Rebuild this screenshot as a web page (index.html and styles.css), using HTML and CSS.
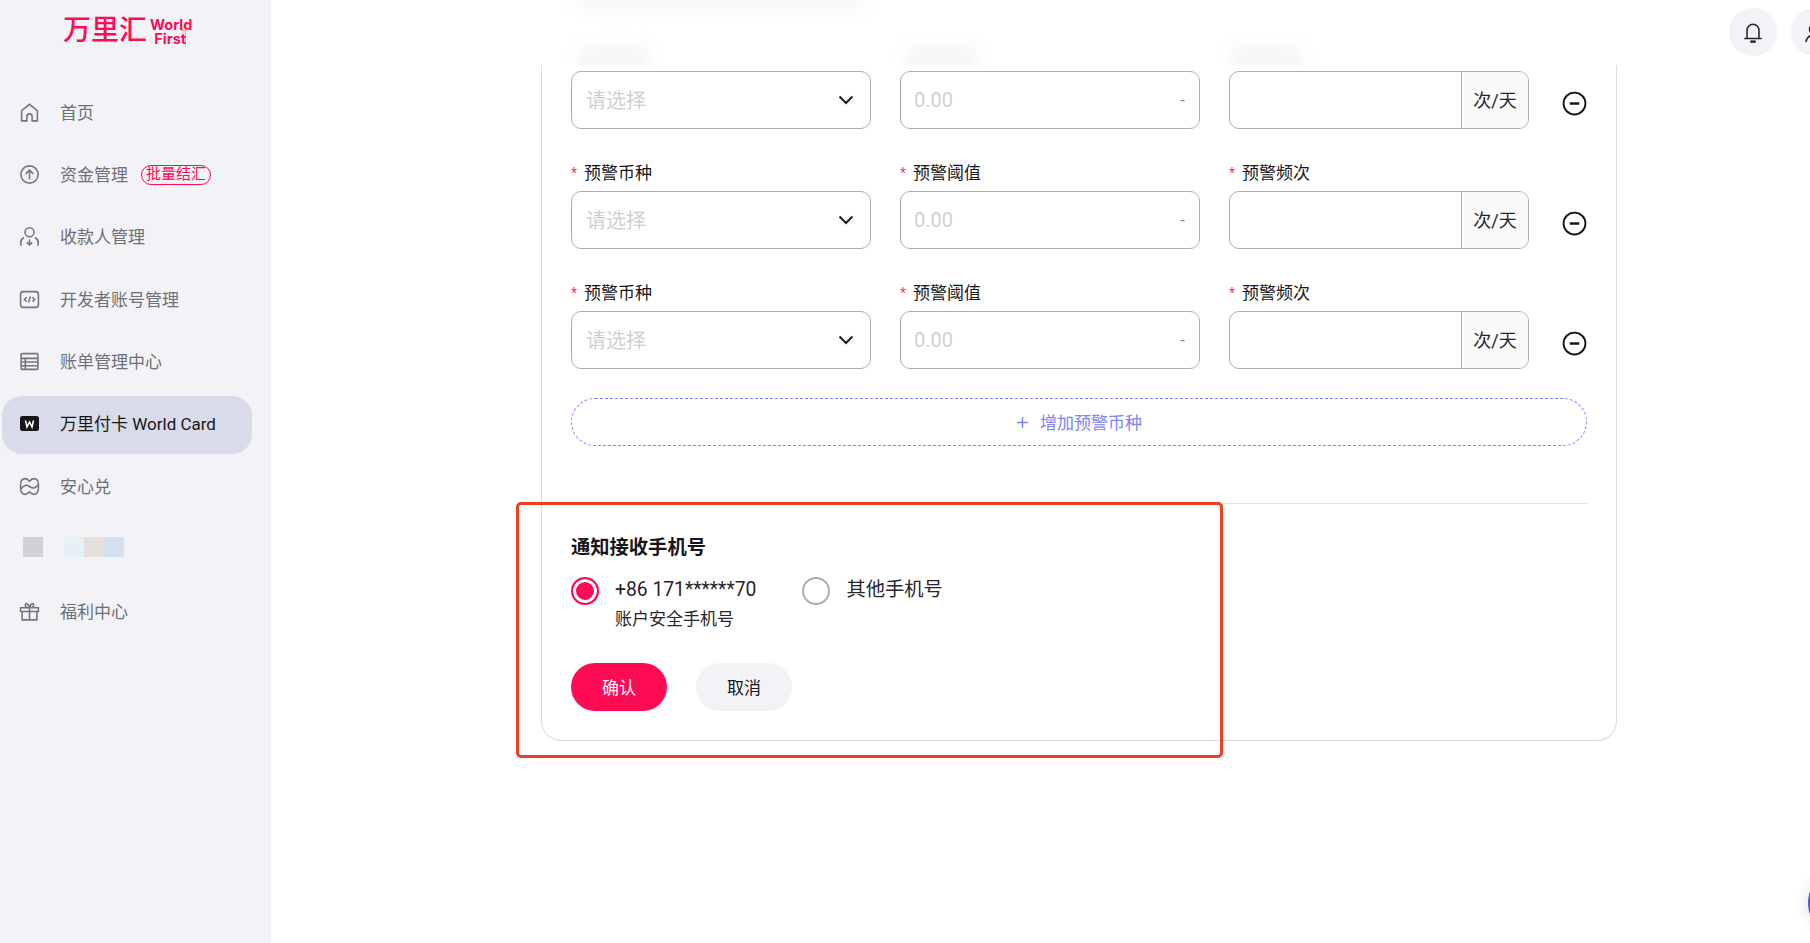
FILE: index.html
```html
<!DOCTYPE html>
<html lang="zh-CN">
<head>
<meta charset="utf-8">
<title>万里付卡 World Card</title>
<link rel="stylesheet" href="styles.css">
</head>
<body>
<div class="app">
  <aside class="sidebar">
    <div class="logo"><span class="logo-cn">万里汇</span><span class="logo-en"><span>World</span><span class="first">Firs<span class="tail">t</span></span></span></div>
    <nav class="nav">
      <a class="nav-item"><svg class="ico" viewBox="0 0 20 20"><path d="M2.500 18V8.200L10 2.200l7.500 6V18h-5v-4.200a2.500 2.500 0 0 0-5 0V18z"/></svg><span>首页</span></a>
      <a class="nav-item"><svg class="ico" viewBox="0 0 20 20"><circle cx="10" cy="10" r="8.200"/><path d="M10 14.800V6M6.400 9.400 10 5.800l3.600 3.600"/></svg><span>资金管理</span><span class="badge">批量结汇</span></a>
      <a class="nav-item"><svg class="ico" viewBox="0 0 20 20"><circle cx="10" cy="6" r="4.300"/><path d="M4.600 11C2.600 12.200 1.600 14 1.600 16.200c0 1 .3 1.800 .7 2.500M15.400 11c2 1.200 3 3 3 5.200 0 1-.3 1.800-.7 2.500M10 12.800v5.200M7.500 15.600 10 18l2.500-2.400"/></svg><span>收款人管理</span></a>
      <a class="nav-item"><svg class="ico" viewBox="0 0 20 20"><rect x="1.500" y="2.500" width="17" height="15" rx="2.500"/><path d="M7.300 7.800 5.100 10l2.200 2.200M12.700 7.800l2.200 2.200-2.200 2.200M11 7.200 9 12.800"/></svg><span>开发者账号管理</span></a>
      <a class="nav-item"><svg class="ico" viewBox="0 0 20 20"><rect x="2" y="2.500" width="16" height="15" rx="1"/><path d="M2 7h16M2 10.500h16M2 14h16M6 7v10.500"/></svg><span>账单管理中心</span></a>
      <a class="nav-item active"><svg class="ico-card" viewBox="0 0 20 16"><rect width="19" height="15" rx="2.500" fill="#17171a"/><path d="M5.500 4.500 7 11l2.500-5 2.500 5 1.500-6.500" fill="none" stroke="#fff" stroke-width="1.500"/></svg><span>万里付卡 World Card</span></a>
      <a class="nav-item"><svg class="ico" viewBox="0 0 20 20"><path d="M6 2.500C8 2.500 9 4 10 5 11 4 12 2.500 14 2.500 17 2.500 18.500 5 18.500 8v3.500C18.500 15 17 17.500 14 17.500 12 17.500 11 16 10 15 9 16 8 17.500 6 17.500 3 17.500 1.500 15 1.500 11.500V8C1.500 5 3 2.500 6 2.500zM1.500 12.500C5 8.500 7 8 10 10s5 2.500 8.500-2"/></svg><span>安心兑</span></a>
      <div class="nav-item blurred-item"><i class="sw sw-grey"></i><span class="sw-group"><i class="sw sw-a"></i><i class="sw sw-b"></i><i class="sw sw-c"></i></span></div>
      <a class="nav-item"><svg class="ico" viewBox="0 0 20 20"><path d="M1.500 6.500h17V10h-17zM3 10v8h14v-8M10 6.500V18M10 6.500C8 6.500 6 5.500 6 3.800 6 1.800 9 1.800 10 6.500zM10 6.500c2 0 4-1 4-2.700 0-2-3-2-4 2.700z"/></svg><span>福利中心</span></a>
    </nav>
  </aside>
  <main class="main">
    <header class="topbar">
      <i class="blob blob-top"></i>
      <i class="blob blob-l1"></i>
      <i class="blob blob-l2"></i>
      <i class="blob blob-l3"></i>
      <div class="round-btn"><svg viewBox="0 0 24 24" class="bell"><path d="M2.500 19h19M5.500 19v-9a6.500 6.500 0 0 1 13 0v9"/><path d="M9 22.500h6" stroke-width="2.600"/></svg></div>
      <div class="round-btn"><svg viewBox="0 0 24 24" class="bell user-ico"><circle cx="12" cy="9" r="6"/><path d="M2 23c1-5 5-8 10-8"/></svg></div>
    </header>
    <div class="content">
      <section class="card">
        <div class="alert-row first">
          <div class="select"><span class="ph">请选择</span><svg class="chev" viewBox="0 0 16 10"><path d="M1.500 1.500 8 8l6.500-6.500"/></svg></div>
          <div class="input"><span class="num">0.00</span><span class="dash">-</span></div>
          <div class="addon-input"><span class="addon">次/天</span></div>
          <svg class="minus" viewBox="0 0 24 24"><circle cx="12" cy="12" r="10.500"/><path d="M7.500 12h9" stroke-width="2.400"/></svg>
        </div>
        <div class="alert-row">
          <label class="lbl"><b>*</b>预警币种</label><label class="lbl"><b>*</b>预警阈值</label><label class="lbl"><b>*</b>预警频次</label><span></span>
          <div class="select"><span class="ph">请选择</span><svg class="chev" viewBox="0 0 16 10"><path d="M1.500 1.500 8 8l6.500-6.500"/></svg></div>
          <div class="input"><span class="num">0.00</span><span class="dash">-</span></div>
          <div class="addon-input"><span class="addon">次/天</span></div>
          <svg class="minus" viewBox="0 0 24 24"><circle cx="12" cy="12" r="10.500"/><path d="M7.500 12h9" stroke-width="2.400"/></svg>
        </div>
        <div class="alert-row">
          <label class="lbl"><b>*</b>预警币种</label><label class="lbl"><b>*</b>预警阈值</label><label class="lbl"><b>*</b>预警频次</label><span></span>
          <div class="select"><span class="ph">请选择</span><svg class="chev" viewBox="0 0 16 10"><path d="M1.500 1.500 8 8l6.500-6.500"/></svg></div>
          <div class="input"><span class="num">0.00</span><span class="dash">-</span></div>
          <div class="addon-input"><span class="addon">次/天</span></div>
          <svg class="minus" viewBox="0 0 24 24"><circle cx="12" cy="12" r="10.500"/><path d="M7.500 12h9" stroke-width="2.400"/></svg>
        </div>
        <button class="add-btn"><svg viewBox="0 0 14 14" class="plus"><path d="M7 1v12M1 7h12"/></svg><span class="add-text">增加预警币种</span></button>
        <hr class="divider">
        <h3 class="title">通知接收手机号</h3>
        <div class="radios">
          <div class="radio-opt"><i class="radio on"></i><div><div class="radio-main">+86 171******70</div><div class="radio-sub">账户安全手机号</div></div></div>
          <div class="radio-opt"><i class="radio"></i><div class="radio-main">其他手机号</div></div>
        </div>
        <div class="actions"><button class="btn primary">确认</button><button class="btn ghost">取消</button></div>
        <div class="highlight"></div>
      </section>
    </div>
    <div class="float-dot"></div>
  </main>
</div>
</body>
</html>
```
FILE: styles.css
```css
* { box-sizing: border-box; }
html, body { margin: 0; height: 100%; overflow: hidden; background: #fff; }
body { font-family: Roboto, "Noto Sans CJK SC", sans-serif; color: #17171a; }
.app { display: flex; height: 943px; }

.sidebar { width: 271px; flex: none; background: #f2f2f7; padding: 0 2px; }
.logo { height: 84px; padding: 16px 0 0 61px; display: flex; align-items: flex-start; gap: 3px; color: #ff0a54; }
.logo-cn { font-size: 28px; line-height: 30px; font-weight: 500; }
.logo-en { display: flex; flex-direction: column; align-items: center; font: 700 14.500px/14px Inter, sans-serif; padding-top: 2px; }
.tail { color: #ff0a54; border-right: 2px solid transparent; box-shadow: inset -2px 2px 0 -1px rgba(255,140,30,.7); }
.nav { display: flex; flex-direction: column; gap: 4.400px; }
.nav-item { height: 58px; width: 250px; padding: 0 0 2px 17px; border-radius: 20px; display: flex; align-items: center; font-size: 17px; color: #6f7076; }
.nav-item > span { padding-bottom: 2px; }
.nav-item.active { background: #d9dbe8; color: #17171a; }
.ico { width: 21px; height: 21px; margin-right: 20px; fill: none; stroke: #75767a; stroke-width: 1.500; flex: none; }
.ico-card { width: 20px; height: 16px; margin-left: 1px; margin-right: 20px; flex: none; }
.nav-item > .badge { margin: 2px 0 0 13px; padding: 0; height: 20px; width: 70px; border: 1px solid #ff0a54; border-radius: 10px; color: #ff0a54; font-size: 15px; line-height: 17px; text-align: center; white-space: nowrap; }
.blurred-item { padding-bottom: 6px; }
.sw { display: block; width: 20px; height: 20px; }
.sw-grey { background: #d0d0d5; margin: 0 3px 0 4px; }
.nav-item > .sw-group { display: flex; margin-left: 18px; padding: 0; }
.sw-a { background: #e6f1f7; }
.sw-b { background: #e6e0dc; }
.sw-c { background: #d5e1f0; }

.main { flex: 1; position: relative; overflow: hidden; }
.topbar { height: 65px; position: relative; display: flex; justify-content: flex-end; gap: 14px; padding: 8px 0 0; margin-right: -29px; }
.blob { position: absolute; background: #efeff0; filter: blur(8px); }
.blob-top { left: 305px; top: -6px; width: 290px; height: 14px; opacity: .6; }
.blob-l1 { left: 308px; top: 46px; width: 70px; height: 30px; opacity: .6; }
.blob-l2 { left: 635px; top: 46px; width: 70px; height: 30px; opacity: .6; }
.blob-l3 { left: 960px; top: 46px; width: 70px; height: 30px; opacity: .6; }
.round-btn { width: 48px; height: 48px; flex: none; border-radius: 50%; background: #f2f2f7; display: flex; align-items: center; justify-content: center; }
.bell { width: 22px; height: 24px; fill: none; stroke: #25252a; stroke-width: 1.700; }
.content { padding-left: 270px; position: relative; z-index: 1; background: #fff; height: 878px; }
.card { position: relative; width: 1076px; height: 676px; padding: 6px 29px 0; border: 1px solid #dcdcdf; border-top: 0; border-radius: 0 0 20px 20px; }

.alert-row { display: grid; grid-template-columns: 300px 300px 300px 1fr; column-gap: 29px; row-gap: 6px; margin-bottom: 31px; align-items: center; }
.lbl { font-size: 17px; line-height: 24px; padding-top: 1px; height: 25px; display: flex; align-items: center; }
.lbl b { color: #f5404e; font-weight: 400; font-size: 14px; width: 13px; }
.select, .input, .addon-input { height: 58px; border: 1px solid #aeaeb2; border-radius: 10px; display: flex; align-items: center; justify-content: space-between; padding: 0 14px; background: #fff; }
.ph { font-size: 20px; color: #cfcfd2; padding-bottom: 2px; }
.num { font-size: 20px; color: #cfcfd2; margin-left: -1px; }
.dash { color: #8e8e92; font-size: 17px; }
.chev { width: 16px; height: 10px; fill: none; stroke: #202024; stroke-width: 2; margin-right: 2px; }
.addon-input { padding: 0; justify-content: flex-end; }
.addon { width: 67px; height: 100%; padding-bottom: 2px; border-left: 1px solid #aeaeb2; background: #fafafa; border-radius: 0 9px 9px 0; font-size: 18px; display: flex; align-items: center; justify-content: center; color: #25252a; }
.minus { width: 25px; height: 25px; justify-self: end; margin-top: 6px; fill: none; stroke: #17171a; stroke-width: 1.800; }
.add-btn { display: flex; align-items: center; justify-content: center; width: 1016px; height: 48px; border: 1px dashed #7c85f2; border-radius: 24px; background: #fff; color: #7c85f2; font: 17px Roboto, "Noto Sans CJK SC", sans-serif; margin-top: -2px; }
.add-text { padding-bottom: 2px; }
.plus { width: 13px; height: 13px; margin-right: 11px; fill: none; stroke: #7c85f2; stroke-width: 1.500; }
.divider { border: 0; border-top: 1px solid #e3e3e6; margin: 57px 0 0; }
.title { font-size: 19.300px; line-height: 28px; font-weight: 700; margin: 30px 0 0; }
.radios { display: flex; gap: 46px; margin-top: 14px; }
.radio-opt { display: flex; gap: 16px; align-items: flex-start; }
.radio { display: block; width: 28px; height: 28px; border-radius: 50%; border: 2px solid #aeaeb2; background: #fff; margin-top: 1px; flex: none; }
.radio.on { border-color: #ff0a54; box-shadow: inset 0 0 0 3px #fff; background: #ff0a54; }
.radio-main { font-size: 19.300px; line-height: 28px; color: #25252a; }
.radio-sub { font-size: 17px; line-height: 24px; margin-top: 3px; color: #25252a; }
.actions { display: flex; gap: 29px; margin-top: 32px; }
.btn { width: 96px; height: 48px; border: 0; padding: 0 0 2px; border-radius: 24px; font: 17px Roboto, "Noto Sans CJK SC", sans-serif; }
.primary { background: #ff0a54; color: #fff; }
.ghost { background: #f2f2f7; color: #17171a; }
.highlight { position: absolute; left: -26px; top: 437px; width: 707px; height: 256px; border: 3px solid #ee3f24; border-radius: 5px; pointer-events: none; }
.float-dot { position: absolute; right: -28px; top: 880px; width: 30px; height: 46px; border-radius: 50%; background: #5257c4; box-shadow: 0 0 16px rgba(0,0,0,.12); z-index: 2; }
```
